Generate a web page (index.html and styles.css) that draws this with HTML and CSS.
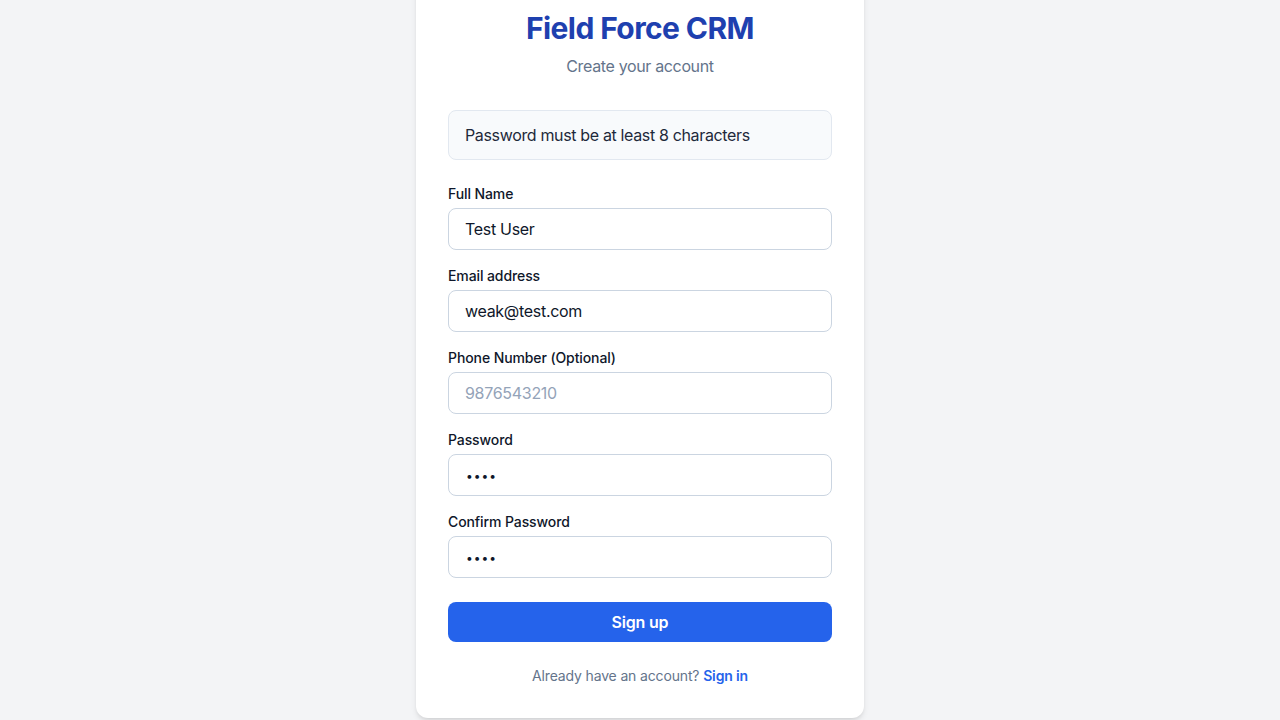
FILE: index.html
```html
<!DOCTYPE html>
<html lang="en">
<head>
<meta charset="utf-8">
<title>Field Force CRM - Sign up</title>
<link rel="stylesheet" href="styles.css">
</head>
<body>
<main class="page">
  <section class="card">
    <h1 class="title">Field Force CRM</h1>
    <p class="subtitle">Create your account</p>
    <div class="alert">Password must be at least 8 characters</div>
    <form class="form">
      <div class="field">
        <label class="label" for="name">Full Name</label>
        <input class="input" id="name" type="text" value="Test User">
      </div>
      <div class="field">
        <label class="label" for="email">Email address</label>
        <input class="input" id="email" type="email" value="weak@test.com">
      </div>
      <div class="field">
        <label class="label" for="phone">Phone Number (Optional)</label>
        <input class="input" id="phone" type="tel" placeholder="9876543210">
      </div>
      <div class="field">
        <label class="label" for="pw">Password</label>
        <input class="input input-pw" id="pw" type="password" value="weak">
      </div>
      <div class="field">
        <label class="label" for="pw2">Confirm Password</label>
        <input class="input input-pw" id="pw2" type="password" value="weak">
      </div>
      <button class="button" type="button">Sign up</button>
    </form>
    <p class="footer">Already have an account? <a class="link" href="#">Sign in</a></p>
  </section>
</main>
</body>
</html>
```

FILE: styles.css
```css
* { box-sizing: border-box; }
html, body { margin: 0; padding: 0; }
body {
  background: #f3f4f6;
  font-family: Inter, "Noto Sans", "Liberation Sans", sans-serif;
  color: #0f172a;
}
.page {
  height: 720px;
  overflow: hidden;
  display: flex;
  flex-direction: column;
  justify-content: flex-end;
  align-items: center;
  padding-bottom: 2px;
}
.card {
  flex-shrink: 0;
  width: 448px;
  background: #ffffff;
  border-radius: 12px;
  box-shadow: 0 4px 6px -1px rgba(0,0,0,0.1), 0 2px 4px -2px rgba(0,0,0,0.1);
  padding: 32px;
}
.title {
  margin: 0;
  text-align: center;
  font-size: 30px;
  line-height: 36px;
  font-weight: 700;
  color: #1e40af;
  letter-spacing: -0.6px;
}
.subtitle {
  margin: 8px 0 0;
  text-align: center;
  font-size: 16px;
  line-height: 24px;
  color: #64748b;
  letter-spacing: -0.35px;
}
.alert {
  margin-top: 32px;
  background: #f8fafc;
  border: 1px solid #e2e8f0;
  border-radius: 8px;
  padding: 12px 16px;
  font-size: 16px;
  line-height: 24px;
  color: #1e293b;
  letter-spacing: -0.35px;
}
.form {
  margin-top: 24px;
  display: flex;
  flex-direction: column;
  gap: 16px;
}
.field {
  display: flex;
  flex-direction: column;
  gap: 4px;
}
.label {
  font-size: 14px;
  line-height: 20px;
  font-weight: 500;
  color: #0f172a;
  letter-spacing: -0.1px;
}
.input {
  width: 100%;
  height: 42px;
  border: 1px solid #cbd5e1;
  border-radius: 8px;
  padding: 8px 16px;
  font-family: inherit;
  font-size: 16px;
  line-height: 24px;
  color: #0f172a;
  background: #ffffff;
  outline: none;
  letter-spacing: -0.3px;
}
.input::placeholder { color: #94a3b8; }
.input-pw {
  font-size: 12px;
  letter-spacing: 1px;
  padding-left: 17px;
}
.button {
  margin-top: 8px;
  height: 40px;
  width: 100%;
  border: none;
  border-radius: 8px;
  background: #2563eb;
  color: #ffffff;
  font-family: inherit;
  font-size: 16px;
  line-height: 24px;
  font-weight: 600;
  letter-spacing: -0.2px;
}
.footer {
  margin: 24px 0 0;
  text-align: center;
  font-size: 14px;
  line-height: 20px;
  color: #64748b;
  letter-spacing: -0.15px;
}
.link {
  color: #2563eb;
  font-weight: 600;
  text-decoration: none;
}
```
